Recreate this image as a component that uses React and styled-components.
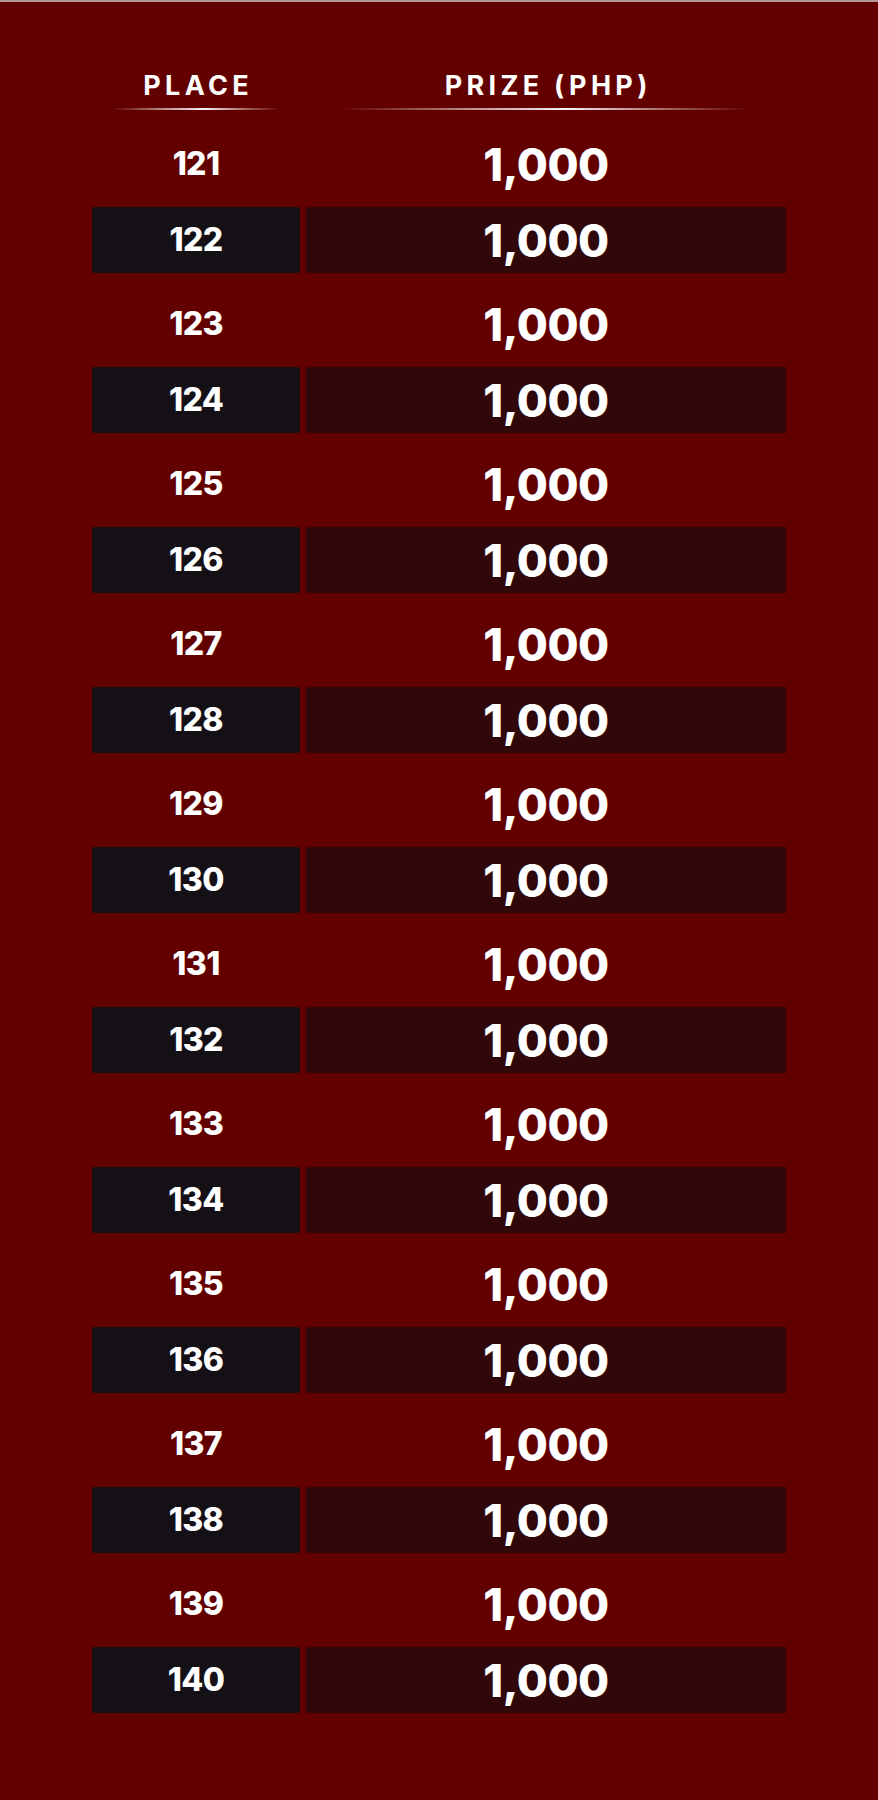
import styled, { createGlobalStyle } from "styled-components";

const GlobalStyle = createGlobalStyle`
  html, body {
    margin: 0;
    padding: 0;
    background: #620000;
  }
  body {
    font-family: Inter, "Open Sans", "Liberation Sans", sans-serif;
    color: #fff;
  }
`;

const Page = styled.div`
  min-height: 1800px;
  box-sizing: border-box;
  background: #620000;
  border-top: 2px solid #b39595;
  padding-top: 53px;
`;

const Table = styled.div`
  width: 694px;
  margin: 0 auto;
  display: grid;
  grid-template-columns: 208px 480px;
  column-gap: 6px;
`;

const HeadCell = styled.div`
  display: flex;
  flex-direction: column;
  align-items: center;
  height: 65px;
`;

const HeadText = styled.div`
  font-size: 27px;
  font-weight: 700;
  letter-spacing: 0.16em;
  margin-right: -0.16em;
  line-height: 1;
  padding-top: 17px;
  text-transform: uppercase;
`;

const Underline = styled.div`
  align-self: stretch;
  margin: 9px ${(p) => p.$inset}px 0;
  height: 2px;
  background: linear-gradient(
    90deg,
    rgba(255, 255, 255, 0) 0%,
    rgba(255, 255, 255, 0.55) 30%,
    rgba(255, 255, 255, 0.95) 55%,
    rgba(255, 255, 255, 0.4) 80%,
    rgba(255, 255, 255, 0) 100%
  );
`;

const Slot = styled.div`
  height: 80px;
  display: flex;
  align-items: stretch;
`;

const Cell = styled.div`
  flex: 1;
  display: flex;
  align-items: center;
  justify-content: center;
  font-weight: 800;
  line-height: 1;
  font-size: ${(p) => (p.$big ? 45 : 32)}px;
  letter-spacing: ${(p) => (p.$big ? "-0.01em" : "-0.02em")};
  margin: ${(p) => (p.$shaded ? "7px 0" : "0")};
  padding-top: ${(p) => (p.$shaded ? 0 : 8)}px;
  background: ${(p) =>
    p.$shaded ? (p.$big ? "#30080a" : "#141016") : "transparent"};
`;

const rows = Array.from({ length: 20 }, (_, i) => ({
  place: 121 + i,
  prize: "1,000",
}));

export default function App() {
  return (
    <Page>
      <GlobalStyle />
      <Table>
        <HeadCell>
          <HeadText>Place</HeadText>
          <Underline $inset={20} />
        </HeadCell>
        <HeadCell>
          <HeadText>Prize (PHP)</HeadText>
          <Underline $inset={36} />
        </HeadCell>
        {rows.map((r, i) => {
          const shaded = i % 2 === 1;
          return [
            <Slot key={`p${r.place}`}>
              <Cell $shaded={shaded}>{r.place}</Cell>
            </Slot>,
            <Slot key={`z${r.place}`}>
              <Cell $shaded={shaded} $big>
                {r.prize}
              </Cell>
            </Slot>,
          ];
        })}
      </Table>
    </Page>
  );
}
